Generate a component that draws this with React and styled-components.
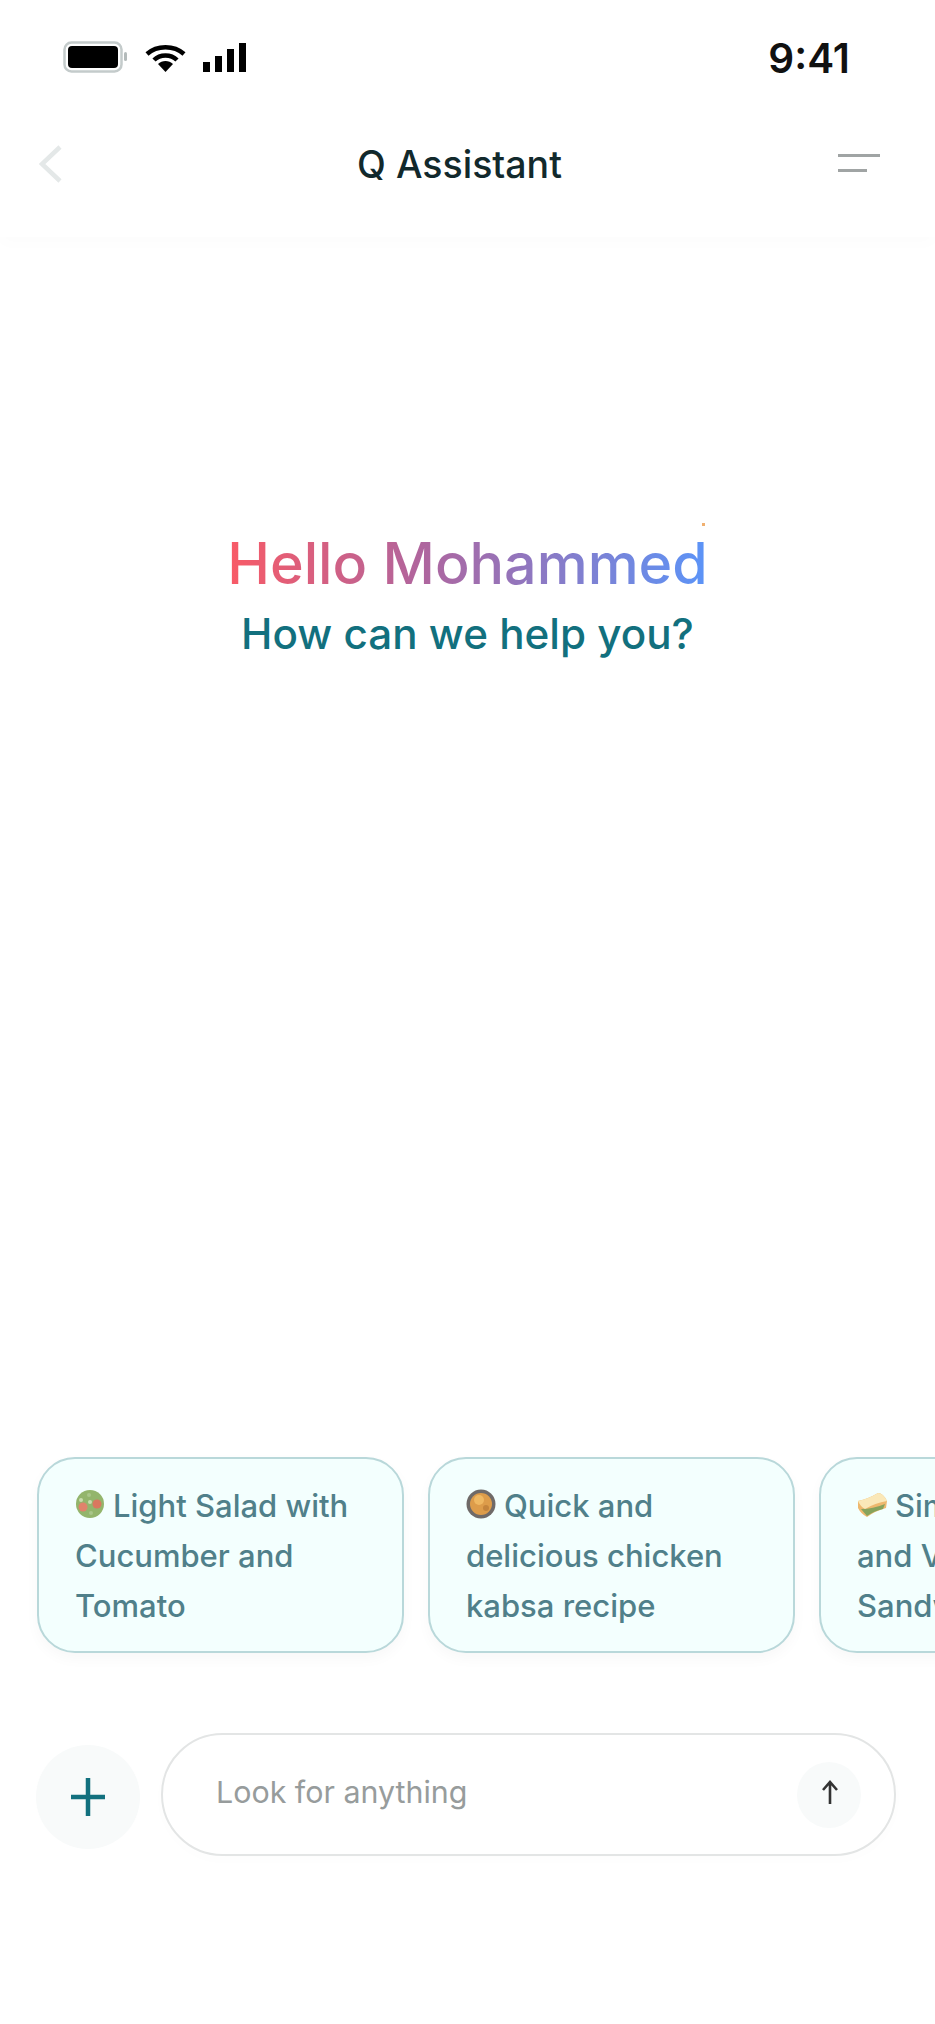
import React from 'react'
import styled, { createGlobalStyle } from 'styled-components'

const GlobalStyle = createGlobalStyle`
  html, body {
    margin: 0;
    padding: 0;
    background: #fff;
  }
  * {
    box-sizing: border-box;
  }
`

const Page = styled.div`
  display: flex;
  flex-direction: column;
  width: 935px;
  height: 2024px;
  overflow: hidden;
  background: #fff;
  font-family: Inter, "Liberation Sans", sans-serif;
`

const StatusBar = styled.div`
  display: flex;
  align-items: center;
  justify-content: space-between;
  height: 90px;
  padding: 24px 85px 0 63px;
`

const StatusIcons = styled.div`
  display: flex;
  align-items: center;
  gap: 17px;
`

const Time = styled.div`
  font-size: 40.5px;
  font-weight: 600;
  color: #111;
  line-height: 46px;
  padding-top: 3px;
`

const Header = styled.header`
  position: relative;
  z-index: 1;
  display: flex;
  align-items: center;
  justify-content: space-between;
  height: 147px;
  padding: 0 55px 0 39px;
  box-shadow: 0 8px 14px rgba(0, 0, 0, 0.012);
`

const Title = styled.h1`
  margin: 2px 0 0 18px;
  font-size: 37.5px;
  font-weight: 500;
  color: #12292c;
`

const Main = styled.main`
  flex: 1;
  display: flex;
  flex-direction: column;
  align-items: center;
  padding-top: 290px;
`

const Hello = styled.h2`
  position: relative;
  margin: 0;
  font-size: 57.4px;
  line-height: 72px;
  font-weight: 500;
  background: linear-gradient(90deg, #f95a66 0%, #b0659d 40%, #5b94f8 100%);
  -webkit-background-clip: text;
  background-clip: text;
  color: transparent;
`

const Spark = styled.span`
  position: absolute;
  top: -4px;
  right: 3px;
  width: 3px;
  height: 3px;
  background: #f0b070;
`

const Sub = styled.p`
  margin: 9px 0 0;
  font-size: 42.2px;
  line-height: 52px;
  font-weight: 500;
  color: #12707e;
`

const Suggestions = styled.div`
  display: flex;
  gap: 24px;
  padding-left: 37px;
`

const Card = styled.div`
  flex: 0 0 367px;
  height: 196px;
  padding: 22px 36px 0;
  border: 2px solid #b9d8da;
  border-radius: 38px;
  background: #f3fffe;
  box-shadow: 0 6px 14px rgba(0, 0, 0, 0.03);
  font-size: 31px;
  line-height: 50px;
  font-weight: 500;
  color: #50808a;
`

const Emoji = styled.svg`
  display: inline-block;
  width: 30px;
  height: 30px;
  margin-right: 8px;
  vertical-align: -2px;
`

const Composer = styled.div`
  display: flex;
  align-items: center;
  gap: 21px;
  padding: 80px 39px 168px 36px;
`

const AddButton = styled.button`
  flex: 0 0 104px;
  height: 104px;
  margin-top: 4px;
  display: flex;
  align-items: center;
  justify-content: center;
  padding: 0;
  border: 0;
  border-radius: 50%;
  background: #f8fafa;
  color: #12707e;
`

const InputBox = styled.div`
  flex: 1;
  display: flex;
  align-items: center;
  justify-content: space-between;
  height: 123px;
  padding: 0 33px 0 53px;
  border: 2px solid #e3e5e5;
  border-radius: 62px;
  background: #fff;
  box-shadow: 0 4px 16px rgba(0, 0, 0, 0.01);
`

const Placeholder = styled.span`
  position: relative;
  top: -3px;
  font-size: 30.4px;
  font-weight: 400;
  color: #979c9c;
`

const SendButton = styled.button`
  width: 64px;
  height: 66px;
  display: flex;
  align-items: center;
  justify-content: center;
  padding: 0 0 5px 2px;
  border: 0;
  border-radius: 50%;
  background: #f8fafa;
  color: #333;
`

const BatteryIcon = () => (
  <svg width="65" height="32" viewBox="0 0 65 32">
    <rect x="1.5" y="1.5" width="57" height="29" rx="7" fill="none" stroke="#c4cbcb" strokeWidth="2.5" />
    <rect x="5" y="5" width="50" height="22" rx="4" fill="#000" />
    <rect x="61" y="11" width="3" height="9" rx="1.5" fill="#b4bbbb" />
  </svg>
)

const WifiIcon = () => (
  <svg width="41" height="29" viewBox="0 0 41 29">
    <path d="M2 11 C12 2 29 2 39 11" fill="none" stroke="#000" strokeWidth="4.5" />
    <path d="M9 17 C15 11 26 11 32 17" fill="none" stroke="#000" strokeWidth="4.5" />
    <path d="M13 21 C17 17 24 17 28 21 L20.5 29 Z" fill="#000" />
  </svg>
)

const SignalIcon = () => (
  <svg width="44" height="29" viewBox="0 0 44 29">
    <rect x="0" y="19" width="7" height="10" fill="#000" />
    <rect x="12" y="13" width="7" height="16" fill="#000" />
    <rect x="24" y="6" width="7" height="23" fill="#000" />
    <rect x="36" y="0" width="7" height="29" fill="#000" />
  </svg>
)

const BackIcon = () => (
  <svg width="24" height="38" viewBox="0 0 24 38">
    <path d="M21 2 L3 19 L21 36" fill="none" stroke="#e4e8e8" strokeWidth="4.5" />
  </svg>
)

const MenuIcon = () => (
  <svg width="42" height="19" viewBox="0 0 42 19">
    <rect x="0" y="0" width="42" height="3" fill="#a0a4a4" />
    <rect x="0" y="15" width="29" height="3" fill="#a0a4a4" />
  </svg>
)

const PlusIcon = () => (
  <svg width="36" height="38" viewBox="0 0 36 38">
    <path d="M18 0 V38 M1 19 H35" fill="none" stroke="currentColor" strokeWidth="4.5" />
  </svg>
)

const ArrowIcon = () => (
  <svg width="18" height="24" viewBox="0 0 18 24">
    <path d="M9 24 V3 M2 10 L9 2 L16 10" fill="none" stroke="currentColor" strokeWidth="2.6" />
  </svg>
)

const SaladEmoji = () => (
  <Emoji viewBox="0 0 30 30">
    <circle cx="15" cy="15" r="14" fill="#93b56c" />
    <circle cx="8" cy="18" r="4.5" fill="#e0836b" />
    <circle cx="22" cy="15" r="4.5" fill="#d9785f" />
    <circle cx="15" cy="13" r="2" fill="#c9dcae" />
    <circle cx="6" cy="11" r="2" fill="#c9dcae" />
    <circle cx="14" cy="6" r="2" fill="#a9c68a" />
    <circle cx="16" cy="24" r="2" fill="#a9c68a" />
  </Emoji>
)

const KabsaEmoji = () => (
  <Emoji viewBox="0 0 30 30">
    <circle cx="15" cy="15" r="14.5" fill="#6f6a68" />
    <circle cx="15" cy="15" r="11" fill="#dd9c4a" />
    <circle cx="13" cy="11" r="5" fill="#efb862" />
    <circle cx="20" cy="19" r="3" fill="#c4843c" />
  </Emoji>
)

const SandwichEmoji = () => (
  <Emoji viewBox="0 0 30 30">
    <path d="M1 12 Q11 10 21 4 Q26 4 30 12 L29 19 Q18 22 10 28 Q4 25 1 19 Z" fill="#eeb86e" />
    <path d="M4 20 Q16 20 28 15 L26 20 Q17 22 10 27 Z" fill="#86a35c" />
    <path d="M1 12 Q11 10 21 4 Q26 4 30 12 Q18 14 8 20 Q3 17 1 12 Z" fill="#fae8b8" />
  </Emoji>
)

const suggestions = [
  { emoji: <SaladEmoji />, text: 'Light Salad with Cucumber and Tomato' },
  { emoji: <KabsaEmoji />, text: 'Quick and delicious chicken kabsa recipe' },
  { emoji: <SandwichEmoji />, text: 'Simple Chicken and Veggie Sandwich' },
]

function App() {
  return (
    <Page>
      <GlobalStyle />
      <StatusBar>
        <StatusIcons>
          <BatteryIcon />
          <WifiIcon />
          <SignalIcon />
        </StatusIcons>
        <Time>9:41</Time>
      </StatusBar>
      <Header>
        <BackIcon />
        <Title>Q Assistant</Title>
        <MenuIcon />
      </Header>
      <Main>
        <Hello>
          Hello Mohammed
          <Spark />
        </Hello>
        <Sub>How can we help you?</Sub>
      </Main>
      <Suggestions>
        {suggestions.map((s) => (
          <Card key={s.text}>
            {s.emoji}
            {s.text}
          </Card>
        ))}
      </Suggestions>
      <Composer>
        <AddButton aria-label="Add">
          <PlusIcon />
        </AddButton>
        <InputBox>
          <Placeholder>Look for anything</Placeholder>
          <SendButton aria-label="Send">
            <ArrowIcon />
          </SendButton>
        </InputBox>
      </Composer>
    </Page>
  )
}

export default App
